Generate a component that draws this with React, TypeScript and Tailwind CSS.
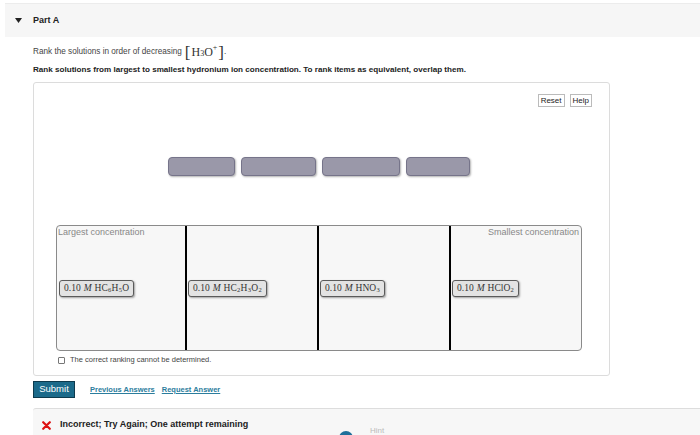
import React from "react";

const serif = { fontFamily: '"Liberation Serif", "DejaVu Serif", serif' } as const;

function Chip({ children }: { children: React.ReactNode }) {
  return (
    <div
      className="h-[17px] px-[4px] flex items-center bg-[#e3e3e3] border border-[#5a5a5a] rounded-[3px] shadow-[1px_1px_2px_rgba(0,0,0,0.35)] text-[9.5px] text-[#333] whitespace-nowrap"
      style={serif}
    >
      {children}
    </div>
  );
}

function Sub({ children }: { children: React.ReactNode }) {
  return <span className="text-[6.5px] relative top-[2px] mx-[0.3px]">{children}</span>;
}

export default function App() {
  return (
    <div
      className="w-[700px] h-[435px] overflow-hidden bg-white text-[#333]"
      style={{ fontFamily: '"Liberation Sans", Arial, sans-serif' }}
    >
      {/* Header */}
      <div className="pt-[3px] pl-[5px]">
        <div className="h-[34px] bg-[#f6f6f6] border-t border-[#ececec] flex items-center pl-[10px]">
          <svg width="7" height="5" viewBox="0 0 7 5" className="mr-[11px]">
            <polygon points="0,0 7,0 3.5,5" fill="#222" />
          </svg>
          <span className="text-[9px] font-bold text-[#222]">Part A</span>
        </div>
      </div>

      <div className="pl-[33px]">
        <div className="mt-[7px] h-[16px] flex items-center text-[8.2px] text-[#444]">
          <span>Rank the solutions in order of decreasing</span>
          <span className="ml-[3px] flex items-center text-[#333]" style={serif}>
            <span className="text-[17px] leading-none">[</span>
            <span className="text-[12px] ml-[1px]">H</span>
            <span className="text-[8px] relative top-[2px]">3</span>
            <span className="text-[12px]">O</span>
            <span className="text-[8px] relative top-[-4px]">+</span>
            <span className="text-[17px] leading-none ml-[1px]">]</span>
          </span>
          <span>.</span>
        </div>
        <div className="mt-[4px] h-[12px] flex items-center text-[8.1px] font-bold text-[#222] whitespace-nowrap">
          Rank solutions from largest to smallest hydronium ion concentration. To rank items as equivalent, overlap them.
        </div>

        {/* Main box */}
        <div className="mt-[6px] w-[577px] h-[294px] border border-[#dcdcdc] rounded-[3px] flex flex-col">
          <div className="pt-[11px] pr-[17px] flex justify-end gap-[5px]">
            <div className="h-[13px] px-[2px] flex items-center border border-[#bbb] text-[8px] font-medium text-[#222]">Reset</div>
            <div className="h-[13px] px-[2px] flex items-center border border-[#bbb] text-[8px] font-medium text-[#222]">Help</div>
          </div>
          <div className="mt-[50px] flex justify-center gap-[6px] pr-[5px]">
            {[67, 75, 78, 64].map((w, i) => (
              <div
                key={i}
                className="h-[19px] bg-[#9a98a9] border border-[#76748a] rounded-[4px] shadow-[1px_1px_2px_rgba(0,0,0,0.3)]"
                style={{ width: w }}
              />
            ))}
          </div>

          {/* Ranking area */}
          <div className="mt-[49px] ml-[22px] w-[526px] h-[126px] border border-[#8a8a8a] rounded-[4px] bg-[#f7f7f7] flex">
            <div className="relative w-[128px] flex items-center pl-[2px]">
              <span className="absolute left-[1px] top-[0px] text-[9px] text-[#888]">Largest concentration</span>
              <Chip>
                0.10<i className="mx-[3px]">M</i>HC<Sub>6</Sub>H<Sub>5</Sub>O
              </Chip>
            </div>
            <div className="w-[2px] bg-black" />
            <div className="relative w-[130px] flex items-center pl-[1px]">
              <Chip>
                0.10<i className="mx-[3px]">M</i>HC<Sub>2</Sub>H<Sub>3</Sub>O<Sub>2</Sub>
              </Chip>
            </div>
            <div className="w-[2px] bg-black" />
            <div className="relative w-[130px] flex items-center pl-[1px]">
              <Chip>
                0.10<i className="mx-[3px]">M</i>HNO<Sub>3</Sub>
              </Chip>
            </div>
            <div className="w-[2px] bg-black" />
            <div className="relative flex-1 flex items-center pl-[1px]">
              <span className="absolute right-[2px] top-[0px] text-[9px] text-[#888]">Smallest concentration</span>
              <Chip>
                0.10<i className="mx-[3px]">M</i>HClO<Sub>2</Sub>
              </Chip>
            </div>
          </div>

          <div className="mt-[3px] pl-[24px] h-[12px] flex items-center gap-[5px]">
            <div className="w-[7px] h-[7px] border border-[#777] rounded-[1px] bg-white" />
            <span className="text-[7.5px] text-[#444]">The correct ranking cannot be determined.</span>
          </div>
        </div>

        {/* Submit row */}
        <div className="mt-[5px] h-[17px] flex items-center">
          <div className="w-[42px] h-[17px] flex items-center justify-center bg-[#1b6a8a] border border-[#0d3a4d] text-white text-[9.5px]">
            Submit
          </div>
          <span className="ml-[15px] text-[7.5px] font-bold text-[#2b7d9d] underline">Previous Answers</span>
          <span className="ml-[7px] text-[7.5px] font-bold text-[#2b7d9d] underline">Request Answer</span>
        </div>

        {/* Feedback band */}
        <div className="mt-[10px] h-[40px] border-t border-[#dddddd] bg-[#f7f7f7] rounded-tl-[3px] relative">
          <div className="pt-[8px] pl-[9px] flex items-center h-[24px]">
            <svg width="9" height="9" viewBox="0 0 9 9">
              <path d="M1.2 1.2 L7.8 7.8 M7.8 1.2 L1.2 7.8" stroke="#d11" strokeWidth="2.2" strokeLinecap="round" />
            </svg>
            <span className="ml-[9px] text-[9px] font-bold text-[#222]">Incorrect; Try Again; One attempt remaining</span>
          </div>
          <div className="absolute left-[306px] top-[22px] w-[14px] h-[14px] rounded-full bg-[#1f6f9a]" />
          <span className="absolute left-[337px] top-[17px] text-[8px] leading-[9px] text-[#bbb]">Hint</span>
        </div>
      </div>
    </div>
  );
}
